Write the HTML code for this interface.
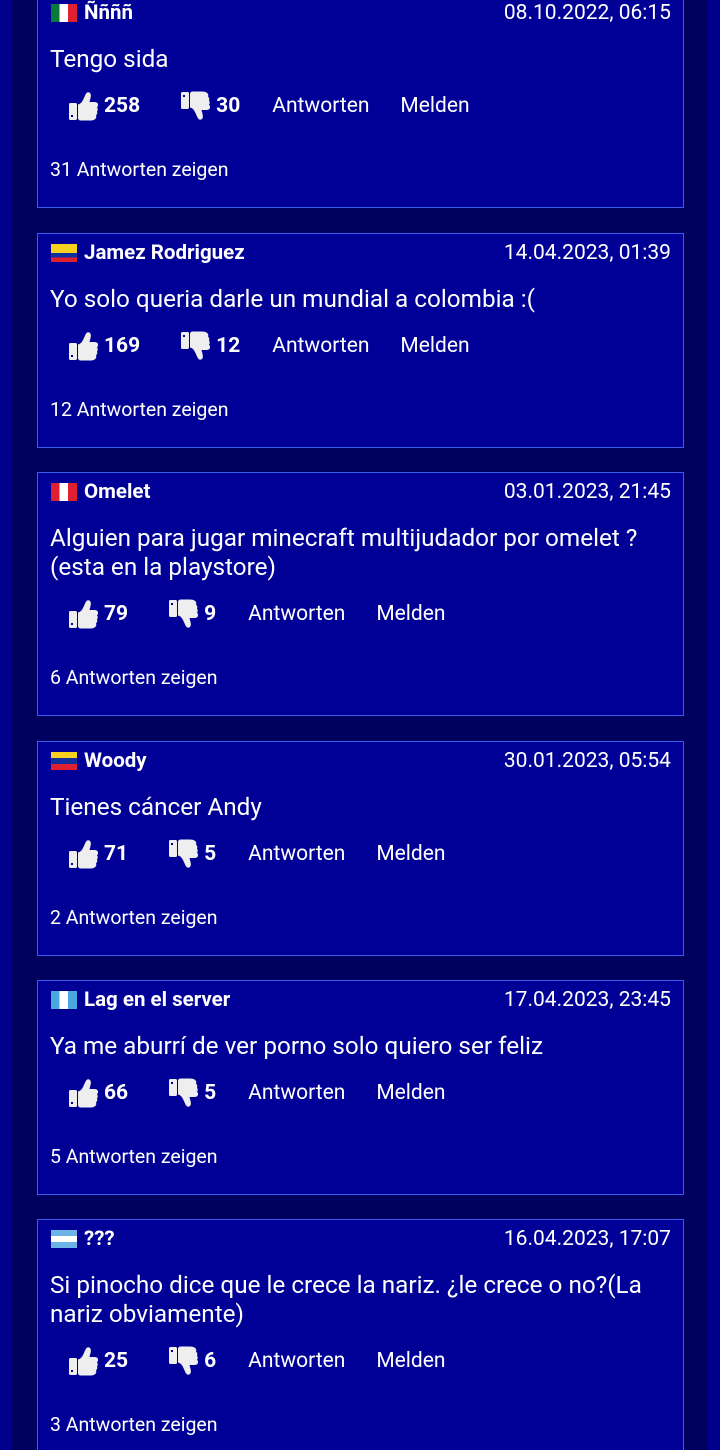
<!DOCTYPE html>
<html><head><meta charset="utf-8"><style>
*{margin:0;padding:0;box-sizing:border-box}
html,body{width:720px;height:1450px;overflow:hidden}
body{background:#00005e;font-family:"Roboto","Liberation Sans",sans-serif;color:#fff;position:relative}
.l{position:absolute;left:0;top:0;width:12px;height:1450px;background:#00008c}
.r{position:absolute;right:0;top:0;width:12px;height:1450px;background:#00008c}
.card{position:absolute;left:37px;width:647px;background:#000096;border:1px solid #3a5cf0}
.h{position:absolute;top:6px;left:13px;right:12px;height:26px;display:flex;align-items:center;font-size:21px}
.h b{font-weight:bold;margin-left:7px;font-size:20.5px}
.h .d{margin-left:auto}
.flag{width:26px;height:18px;display:inline-block}
.t{position:absolute;left:12px;top:50px;font-size:24.3px;line-height:29px;right:10px}
.a{position:absolute;left:30px;height:32px;display:flex;align-items:center;font-size:21px}
.a svg{width:30px;height:30px;margin-right:6px}
.a .n{font-weight:bold}
.z{position:absolute;left:12px;font-size:19.5px}
</style></head><body>
<div class="l"></div><div class="r"></div>
<svg width="0" height="0" style="position:absolute">
<defs>
<g id="up"><rect x="1" y="12" width="8" height="17" rx="1.5" fill="#eee"/><rect x="3" y="24" width="2" height="2" fill="#000096"/><path d="M10 13.5 Q13 13 15 9 L17.5 3.5 Q19.5 0 22 2 Q23.5 3.5 22.5 7 L21.5 11 L27 11 Q30.5 11.5 30 14.5 Q29.5 16 29 16.5 Q30.5 18 29 20.5 Q30 22.5 28 24.5 Q29 27 26.5 28.5 Q25 29.5 22 29.5 L13 29.5 Q10 29.5 10 27 Z" fill="#eee"/></g>
<g id="dn" transform="translate(0,30) scale(1,-1)"><use href="#up"/></g>
</defs></svg>

<div class="card" style="top:-7px;height:215px">
<div class="h"><span class="flag" style="background:linear-gradient(90deg,#0a7a3a 33%,#fff 33% 66%,#e02030 66%)"></span><b>Ññññ</b><span class="d">08.10.2022, 06:15</span></div>
<div class="t">Tengo sida</div>
<div class="a" style="top:96px"><svg viewBox="0 0 30 30"><use href="#up"/></svg><span class="n">258</span><svg viewBox="0 0 30 30" style="margin-left:40px"><use href="#dn"/></svg><span class="n">30</span><span style="margin-left:32px">Antworten</span><span style="margin-left:31px">Melden</span></div>
<div class="z" style="top:164px">31 Antworten zeigen</div>
</div>

<div class="card" style="top:233px;height:215px">
<div class="h"><span class="flag" style="background:linear-gradient(#f8d020 50%,#1030a0 50% 75%,#e02030 75%)"></span><b>Jamez Rodriguez</b><span class="d">14.04.2023, 01:39</span></div>
<div class="t">Yo solo queria darle un mundial a colombia :(</div>
<div class="a" style="top:96px"><svg viewBox="0 0 30 30"><use href="#up"/></svg><span class="n">169</span><svg viewBox="0 0 30 30" style="margin-left:40px"><use href="#dn"/></svg><span class="n">12</span><span style="margin-left:32px">Antworten</span><span style="margin-left:31px">Melden</span></div>
<div class="z" style="top:164px">12 Antworten zeigen</div>
</div>

<div class="card" style="top:472px;height:244px">
<div class="h"><span class="flag" style="background:linear-gradient(90deg,#e02030 33%,#fff 33% 66%,#e02030 66%)"></span><b>Omelet</b><span class="d">03.01.2023, 21:45</span></div>
<div class="t">Alguien para jugar minecraft multijudador por omelet ?<br>(esta en la playstore)</div>
<div class="a" style="top:125px"><svg viewBox="0 0 30 30"><use href="#up"/></svg><span class="n">79</span><svg viewBox="0 0 30 30" style="margin-left:40px"><use href="#dn"/></svg><span class="n">9</span><span style="margin-left:32px">Antworten</span><span style="margin-left:31px">Melden</span></div>
<div class="z" style="top:193px">6 Antworten zeigen</div>
</div>

<div class="card" style="top:741px;height:215px">
<div class="h"><span class="flag" style="background:linear-gradient(#f8d020 33%,#1030a0 33% 66%,#e02030 66%)"></span><b>Woody</b><span class="d">30.01.2023, 05:54</span></div>
<div class="t">Tienes cáncer Andy</div>
<div class="a" style="top:96px"><svg viewBox="0 0 30 30"><use href="#up"/></svg><span class="n">71</span><svg viewBox="0 0 30 30" style="margin-left:40px"><use href="#dn"/></svg><span class="n">5</span><span style="margin-left:32px">Antworten</span><span style="margin-left:31px">Melden</span></div>
<div class="z" style="top:164px">2 Antworten zeigen</div>
</div>

<div class="card" style="top:980px;height:215px">
<div class="h"><span class="flag" style="background:linear-gradient(90deg,#4aa8e0 33%,#fff 33% 66%,#4aa8e0 66%)"></span><b>Lag en el server</b><span class="d">17.04.2023, 23:45</span></div>
<div class="t">Ya me aburrí de ver porno solo quiero ser feliz</div>
<div class="a" style="top:96px"><svg viewBox="0 0 30 30"><use href="#up"/></svg><span class="n">66</span><svg viewBox="0 0 30 30" style="margin-left:40px"><use href="#dn"/></svg><span class="n">5</span><span style="margin-left:32px">Antworten</span><span style="margin-left:31px">Melden</span></div>
<div class="z" style="top:164px">5 Antworten zeigen</div>
</div>

<div class="card" style="top:1219px;height:244px">
<div class="h"><span class="flag" style="background:linear-gradient(#6cb4e8 33%,#fff 33% 66%,#6cb4e8 66%)"></span><b>???</b><span class="d">16.04.2023, 17:07</span></div>
<div class="t">Si pinocho dice que le crece la nariz. ¿le crece o no?(La<br>nariz obviamente)</div>
<div class="a" style="top:125px"><svg viewBox="0 0 30 30"><use href="#up"/></svg><span class="n">25</span><svg viewBox="0 0 30 30" style="margin-left:40px"><use href="#dn"/></svg><span class="n">6</span><span style="margin-left:32px">Antworten</span><span style="margin-left:31px">Melden</span></div>
<div class="z" style="top:193px">3 Antworten zeigen</div>
</div>
</body></html>
